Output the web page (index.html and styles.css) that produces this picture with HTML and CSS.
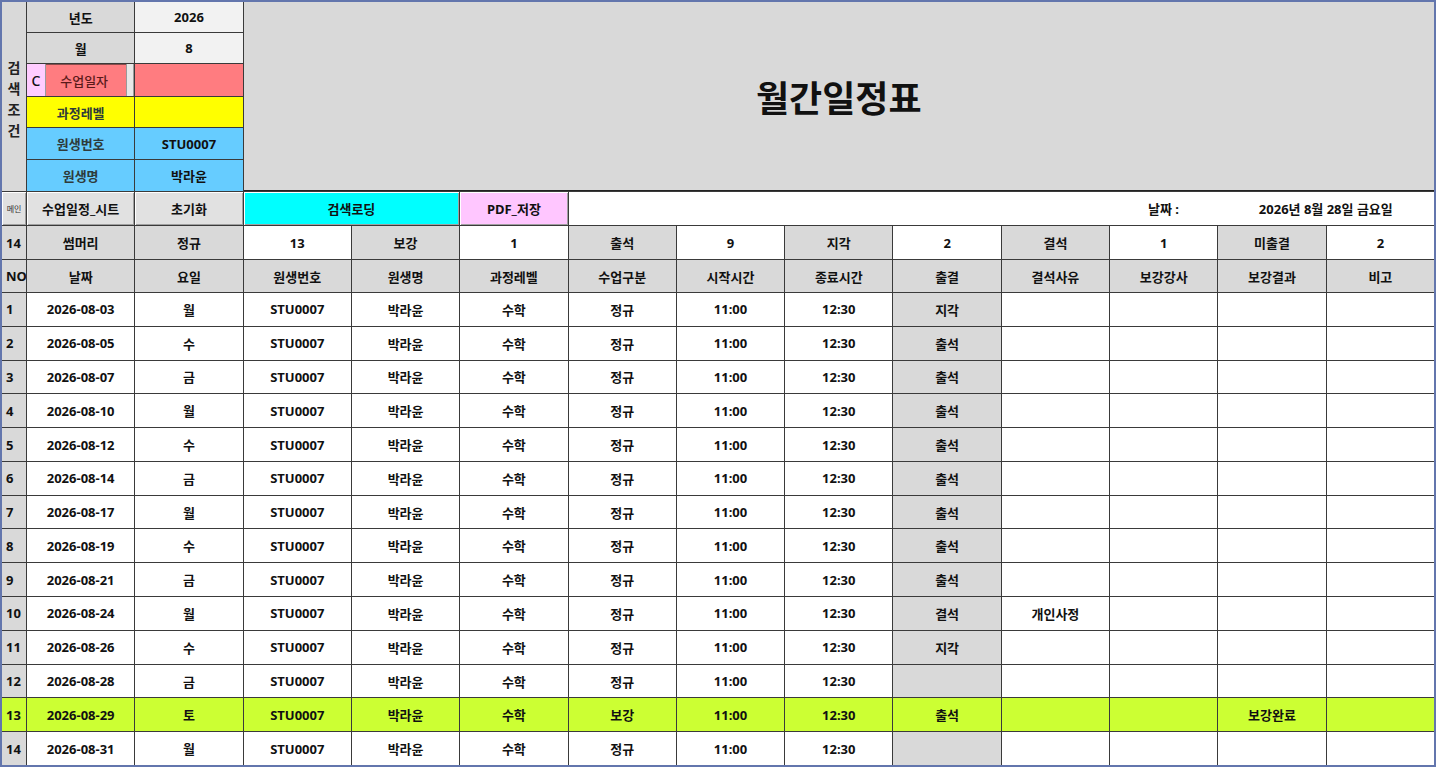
FILE: index.html
```html
<!DOCTYPE html>
<html lang="ko">
<head>
<meta charset="utf-8">
<title>월간일정표</title>
<link rel="stylesheet" href="styles.css">
</head>
<body>
<div class="sheet">
  <div class="c g cond">검<br>색<br>조<br>건</div>
  <div class="c g r1 c2">년도</div>
  <div class="c lg r1 c3">2026</div>
  <div class="title">월간일정표</div>

  <div class="c g r2 c2">월</div>
  <div class="c lg r2 c3">8</div>

  <div class="c r3 c2 datecell">
    <span class="cbox">C</span>
    <span class="dlabel">수업일자</span>
    <span class="strip"></span>
  </div>
  <div class="c red r3 c3"></div>

  <div class="c yel r4 c2 lab">과정레벨</div>
  <div class="c yel r4 c3"></div>

  <div class="c blue r5 c2 lab">원생번호</div>
  <div class="c blue r5 c3">STU0007</div>

  <div class="c blue r6 c2 lab">원생명</div>
  <div class="c blue r6 c3">박라윤</div>

  <div class="c btn main">메인</div>
  <div class="c btn">수업일정_시트</div>
  <div class="c btn">초기화</div>
  <div class="c btn cyan span2">검색로딩</div>
  <div class="c btn pink">PDF_저장</div>
  <div class="c w datebar">
    <span class="dl">날짜 :</span>
    <span class="dv">2026년 8월 28일 금요일</span>
  </div>

  <div class="c g left">14</div>
  <div class="c g">썸머리</div>
  <div class="c g">정규</div>
  <div class="c w">13</div>
  <div class="c g">보강</div>
  <div class="c w">1</div>
  <div class="c g">출석</div>
  <div class="c w">9</div>
  <div class="c g">지각</div>
  <div class="c w">2</div>
  <div class="c g">결석</div>
  <div class="c w">1</div>
  <div class="c g">미출결</div>
  <div class="c w">2</div>

  <div class="c g left">NO</div>
  <div class="c g">날짜</div>
  <div class="c g">요일</div>
  <div class="c g">원생번호</div>
  <div class="c g">원생명</div>
  <div class="c g">과정레벨</div>
  <div class="c g">수업구분</div>
  <div class="c g">시작시간</div>
  <div class="c g">종료시간</div>
  <div class="c g">출결</div>
  <div class="c g">결석사유</div>
  <div class="c g">보강강사</div>
  <div class="c g">보강결과</div>
  <div class="c g">비고</div>

  <div class="c g left">1</div><div class="c w">2026-08-03</div><div class="c w">월</div><div class="c w">STU0007</div><div class="c w">박라윤</div><div class="c w">수학</div><div class="c w">정규</div><div class="c w">11:00</div><div class="c w">12:30</div><div class="c g">지각</div><div class="c w"></div><div class="c w"></div><div class="c w"></div><div class="c w"></div>
  <div class="c g left">2</div><div class="c w">2026-08-05</div><div class="c w">수</div><div class="c w">STU0007</div><div class="c w">박라윤</div><div class="c w">수학</div><div class="c w">정규</div><div class="c w">11:00</div><div class="c w">12:30</div><div class="c g">출석</div><div class="c w"></div><div class="c w"></div><div class="c w"></div><div class="c w"></div>
  <div class="c g left">3</div><div class="c w">2026-08-07</div><div class="c w">금</div><div class="c w">STU0007</div><div class="c w">박라윤</div><div class="c w">수학</div><div class="c w">정규</div><div class="c w">11:00</div><div class="c w">12:30</div><div class="c g">출석</div><div class="c w"></div><div class="c w"></div><div class="c w"></div><div class="c w"></div>
  <div class="c g left">4</div><div class="c w">2026-08-10</div><div class="c w">월</div><div class="c w">STU0007</div><div class="c w">박라윤</div><div class="c w">수학</div><div class="c w">정규</div><div class="c w">11:00</div><div class="c w">12:30</div><div class="c g">출석</div><div class="c w"></div><div class="c w"></div><div class="c w"></div><div class="c w"></div>
  <div class="c g left">5</div><div class="c w">2026-08-12</div><div class="c w">수</div><div class="c w">STU0007</div><div class="c w">박라윤</div><div class="c w">수학</div><div class="c w">정규</div><div class="c w">11:00</div><div class="c w">12:30</div><div class="c g">출석</div><div class="c w"></div><div class="c w"></div><div class="c w"></div><div class="c w"></div>
  <div class="c g left">6</div><div class="c w">2026-08-14</div><div class="c w">금</div><div class="c w">STU0007</div><div class="c w">박라윤</div><div class="c w">수학</div><div class="c w">정규</div><div class="c w">11:00</div><div class="c w">12:30</div><div class="c g">출석</div><div class="c w"></div><div class="c w"></div><div class="c w"></div><div class="c w"></div>
  <div class="c g left">7</div><div class="c w">2026-08-17</div><div class="c w">월</div><div class="c w">STU0007</div><div class="c w">박라윤</div><div class="c w">수학</div><div class="c w">정규</div><div class="c w">11:00</div><div class="c w">12:30</div><div class="c g">출석</div><div class="c w"></div><div class="c w"></div><div class="c w"></div><div class="c w"></div>
  <div class="c g left">8</div><div class="c w">2026-08-19</div><div class="c w">수</div><div class="c w">STU0007</div><div class="c w">박라윤</div><div class="c w">수학</div><div class="c w">정규</div><div class="c w">11:00</div><div class="c w">12:30</div><div class="c g">출석</div><div class="c w"></div><div class="c w"></div><div class="c w"></div><div class="c w"></div>
  <div class="c g left">9</div><div class="c w">2026-08-21</div><div class="c w">금</div><div class="c w">STU0007</div><div class="c w">박라윤</div><div class="c w">수학</div><div class="c w">정규</div><div class="c w">11:00</div><div class="c w">12:30</div><div class="c g">출석</div><div class="c w"></div><div class="c w"></div><div class="c w"></div><div class="c w"></div>
  <div class="c g left">10</div><div class="c w">2026-08-24</div><div class="c w">월</div><div class="c w">STU0007</div><div class="c w">박라윤</div><div class="c w">수학</div><div class="c w">정규</div><div class="c w">11:00</div><div class="c w">12:30</div><div class="c g">결석</div><div class="c w">개인사정</div><div class="c w"></div><div class="c w"></div><div class="c w"></div>
  <div class="c g left">11</div><div class="c w">2026-08-26</div><div class="c w">수</div><div class="c w">STU0007</div><div class="c w">박라윤</div><div class="c w">수학</div><div class="c w">정규</div><div class="c w">11:00</div><div class="c w">12:30</div><div class="c g">지각</div><div class="c w"></div><div class="c w"></div><div class="c w"></div><div class="c w"></div>
  <div class="c g left">12</div><div class="c w">2026-08-28</div><div class="c w">금</div><div class="c w">STU0007</div><div class="c w">박라윤</div><div class="c w">수학</div><div class="c w">정규</div><div class="c w">11:00</div><div class="c w">12:30</div><div class="c g"></div><div class="c w"></div><div class="c w"></div><div class="c w"></div><div class="c w"></div>
  <div class="c lime left">13</div><div class="c lime">2026-08-29</div><div class="c lime">토</div><div class="c lime">STU0007</div><div class="c lime">박라윤</div><div class="c lime">수학</div><div class="c lime">보강</div><div class="c lime">11:00</div><div class="c lime">12:30</div><div class="c lime">출석</div><div class="c lime"></div><div class="c lime"></div><div class="c lime">보강완료</div><div class="c lime"></div>
  <div class="c g left">14</div><div class="c w">2026-08-31</div><div class="c w">월</div><div class="c w">STU0007</div><div class="c w">박라윤</div><div class="c w">수학</div><div class="c w">정규</div><div class="c w">11:00</div><div class="c w">12:30</div><div class="c g"></div><div class="c w"></div><div class="c w"></div><div class="c w"></div><div class="c w"></div>
</div>
</body>
</html>
```

FILE: styles.css
```css
html, body {
  margin: 0;
  padding: 0;
  background: #ffffff;
}

.sheet {
  box-sizing: border-box;
  width: 1436px;
  height: 767px;
  border: 2px solid #6376ad;
  background: #3a3a3a;
  display: grid;
  grid-template-columns: 24px repeat(13, 1fr);
  grid-template-rows: 30px 30px 32px 30px 31px 31px 33px 33px 32px repeat(14, 1fr);
  gap: 1px;
  font-family: "Noto Sans", "Noto Sans CJK KR", sans-serif;
  font-weight: 700;
  font-size: 13px;
  color: #111;
}

.c {
  display: flex;
  align-items: center;
  justify-content: center;
  white-space: nowrap;
  overflow: hidden;
}

.g { background: #d9d9d9; }
.lg { background: #f2f2f2; }
.w { background: #ffffff; }
.red { background: #ff7c80; }
.yel { background: #ffff00; }
.blue { background: #66ccff; }
.lime { background: #ccff33; }

.left {
  justify-content: flex-start;
  padding-left: 4px;
}

.lab { color: #2e3b3b; }

.cond {
  grid-column: 1;
  grid-row: 1 / span 6;
  font-size: 14px;
  line-height: 21px;
  text-align: center;
  color: #222;
  padding-top: 4px;
}

.c2 { grid-column: 2; }
.c3 { grid-column: 3; }
.r1 { grid-row: 1; }
.r2 { grid-row: 2; }
.r3 { grid-row: 3; }
.r4 { grid-row: 4; }
.r5 { grid-row: 5; }
.r6 { grid-row: 6; }

.title {
  grid-column: 4 / span 11;
  grid-row: 1 / span 6;
  background: #d9d9d9;
  border-bottom: 1px solid #222;
  display: flex;
  align-items: center;
  justify-content: center;
  font-size: 36px;
  font-weight: 700;
  color: #111;
  font-family: "Noto Sans CJK KR", sans-serif;
}

.datecell {
  background: #d9d9d9;
  justify-content: flex-start;
  align-items: stretch;
}
.cbox {
  width: 18px;
  background: #ffccff;
  display: flex;
  align-items: center;
  justify-content: center;
  font-size: 14px;
  font-weight: 500;
  border-right: 1px solid #9a9a9a;
  color: #111;
}
.dlabel {
  flex: 1;
  background: #ff7c80;
  display: flex;
  align-items: center;
  justify-content: center;
  font-weight: 500;
  color: #5a1a1a;
  font-size: 13px;
  padding-right: 4px;
  border-top: 1px solid #8a4a4a;
}
.strip {
  width: 6px;
  background: #e8e8e8;
  border-left: 1px solid #9a9a9a;
  border-right: 1px solid #9a9a9a;
}

.btn {
  background: #e1e1e1;
  box-shadow: inset 1px 1px 0 #ffffff, inset -1px -1px 0 #a0a0a0;
  color: #111;
}
.main {
  font-size: 8px;
  font-weight: 400;
  color: #333;
}
.cyan { background: #00ffff; }
.pink { background: #ffc6ff; }
.span2 { grid-column: span 2; }

.datebar {
  grid-column: span 8;
  display: grid;
  grid-template-columns: 5fr 1fr 2fr;
  justify-items: center;
}
.dl { grid-column: 2; }
.dv { grid-column: 3; }
```
